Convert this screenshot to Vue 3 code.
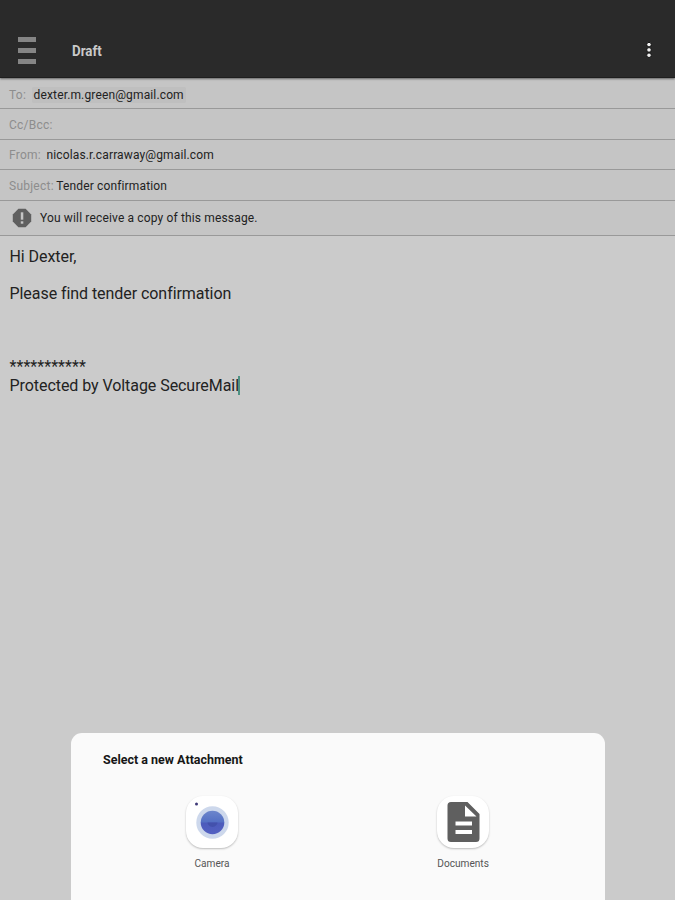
<template>
  <div class="screen">
    <header class="app-bar">
      <button class="menu-btn" aria-label="Menu">
        <span></span>
        <span></span>
        <span></span>
      </button>
      <h1 class="app-title">Draft</h1>
      <svg class="more" width="10" height="20" viewBox="0 0 10 20">
        <g fill="#f2f2f2" stroke="#111" stroke-width="1">
          <circle cx="5" cy="3.6" r="2.3" />
          <circle cx="5" cy="8.9" r="2.3" />
          <circle cx="5" cy="14.2" r="2.3" />
        </g>
      </svg>
    </header>

    <div class="fields">
      <div v-for="f in fields" :key="f.key" class="field" :class="f.key">
        <span class="label">{{ f.label }}</span>
        <span v-if="f.value" class="value">{{ f.value }}</span>
      </div>
      <div class="notice">
        <svg class="notice-icon" width="20" height="20" viewBox="0 0 20 20">
          <path d="M6.4 0.8h7.2l5.6 5.6v7.2l-5.6 5.6H6.4L0.8 13.6V6.4z" fill="#5f5f5f" />
          <rect x="8.8" y="4.3" width="2.5" height="7.4" fill="#c4c4c4" />
          <rect x="8.8" y="13.3" width="2.5" height="2.4" fill="#c4c4c4" />
        </svg>
        <span class="notice-text">You will receive a copy of this message.</span>
      </div>
    </div>

    <main class="body">
      <p class="greeting">Hi Dexter,</p>
      <p class="message">Please find tender confirmation</p>
      <p class="stars">***********</p>
      <p class="signature"><span class="sig-text">Protected by Voltage SecureMail</span><i class="caret"></i></p>
    </main>

    <section class="sheet">
      <h2 class="sheet-title">Select a new Attachment</h2>
      <div class="options">
        <div class="option">
          <div class="tile">
            <svg width="52" height="52" viewBox="0 0 52 52">
              <defs>
                <linearGradient id="lens" x1="0" y1="0" x2="0" y2="1">
                  <stop offset="0" stop-color="#6c86cc" />
                  <stop offset="0.48" stop-color="#5470c4" />
                  <stop offset="0.52" stop-color="#4c5bbb" />
                  <stop offset="1" stop-color="#5360c2" />
                </linearGradient>
              </defs>
              <circle cx="10.5" cy="8" r="1.5" fill="#3f3a78" />
              <circle cx="26.5" cy="26.5" r="16.2" fill="#cdd8ec" />
              <circle cx="26.5" cy="26.5" r="11.8" fill="url(#lens)" />
              <path d="M21.5 26.5h10c0 1.8-2.2 4.4-5 4.4s-5-2.6-5-4.4z" fill="#4351ac" />
            </svg>
          </div>
          <span class="option-label">Camera</span>
        </div>
        <div class="option">
          <div class="tile">
            <svg width="52" height="52" viewBox="0 0 52 52">
              <path
                fill="#5f5f5f"
                fill-rule="evenodd"
                d="M14 6h16.5L42.5 18v24.5a3.5 3.5 0 0 1-3.5 3.5H14a3.5 3.5 0 0 1-3.5-3.5v-33A3.5 3.5 0 0 1 14 6zM28 9.5V20.500h11.500zM18.500 25.500v4h16.500v-4zM18.500 34v4h16.500v-4z"
              />
            </svg>
          </div>
          <span class="option-label">Documents</span>
        </div>
      </div>
    </section>
  </div>
</template>

<script setup>
const fields = [
  { key: 'to', label: 'To:', value: 'dexter.m.green@gmail.com' },
  { key: 'cc', label: 'Cc/Bcc:', value: '' },
  { key: 'from', label: 'From:', value: 'nicolas.r.carraway@gmail.com' },
  { key: 'subject', label: 'Subject:', value: 'Tender confirmation' },
];
</script>

<style>
body {
  margin: 0;
  background: #cbcbcb;
}
</style>

<style scoped>
.screen {
  height: 900px;
  display: flex;
  flex-direction: column;
  overflow: hidden;
  background: #cbcbcb;
  font-family: Roboto, "Liberation Sans", sans-serif;
  color: #222;
}

.app-bar {
  height: 78px;
  flex: none;
  box-sizing: border-box;
  padding: 24px 21px 0 18px;
  display: flex;
  align-items: center;
  background: #2a2a2a;
  border-bottom: 1px solid #1e1e1e;
  box-shadow: 0 1px 2px rgba(0, 0, 0, 0.5);
  position: relative;
}

.menu-btn {
  width: 18px;
  padding: 0;
  border: 0;
  background: none;
  display: flex;
  flex-direction: column;
  gap: 6px;
}

.menu-btn span {
  height: 4.7px;
  background: #858585;
}

.app-title {
  margin: 0 auto 0 36px;
  font-size: 15.5px;
  font-weight: 700;
  line-height: 20px;
  color: #c9c9c9;
  transform: scaleX(0.86);
  transform-origin: left;
}

.fields {
  background: #c5c5c5;
  font-size: 12px;
  flex: none;
}

.field {
  height: 30.6px;
  box-sizing: border-box;
  padding: 2px 0 0 9px;
  display: flex;
  align-items: center;
  border-bottom: 1px solid #999;
}

.field.to {
  height: 31px;
  padding-top: 3px;
}

.label {
  color: #8d8d8d;
  letter-spacing: 0.25px;
}

.value {
  margin-left: 5.5px;
  color: #222;
  letter-spacing: 0.14px;
}

.to .value {
  padding: 1px 2px;
  background: #bfbfbf;
  border-radius: 2px;
}

.subject .value {
  margin-left: 2.5px;
}

.notice {
  height: 35px;
  box-sizing: border-box;
  padding-left: 12px;
  display: flex;
  align-items: center;
  border-bottom: 1px solid #999;
}

.notice-text {
  margin-left: 8px;
  letter-spacing: 0.15px;
}

.body {
  padding-left: 9.5px;
  font-size: 16px;
  line-height: 20px;
  letter-spacing: -0.06px;
}

.body p {
  margin: 0;
}

.greeting {
  padding-top: 11px;
}

.body .message {
  margin-top: 17px;
}

.body .stars {
  margin-top: 53px;
  letter-spacing: 0.05px;
}

.body .signature {
  display: flex;
  align-items: center;
  margin-top: -1px;
}

.caret {
  width: 2px;
  height: 19px;
  margin-left: -1px;
  background: #4e9182;
}

.sheet {
  width: 534px;
  height: 167px;
  box-sizing: border-box;
  margin: auto 0 0 71px;
  padding: 17px 0 0 31.5px;
  border-radius: 11px 11px 0 0;
  background: #fafafa;
}

.sheet-title {
  margin: 0;
  font-size: 13.5px;
  font-weight: 700;
  line-height: 18px;
  color: #161616;
  transform: scaleX(0.925);
  transform-origin: left;
}

.options {
  margin: 28px 0 0 -16px;
  width: 502px;
  display: grid;
  grid-template-columns: 1fr 1fr;
}

.option {
  display: flex;
  flex-direction: column;
  align-items: center;
}

.tile {
  width: 52px;
  height: 52px;
  border-radius: 17px;
  background: #fff;
  box-shadow: 0 1px 2px rgba(0, 0, 0, 0.25);
}

.tile svg {
  display: block;
}

.option-label {
  margin-top: 9px;
  font-size: 11px;
  line-height: 14px;
  color: #555;
  transform: scaleX(0.92);
}
</style>
